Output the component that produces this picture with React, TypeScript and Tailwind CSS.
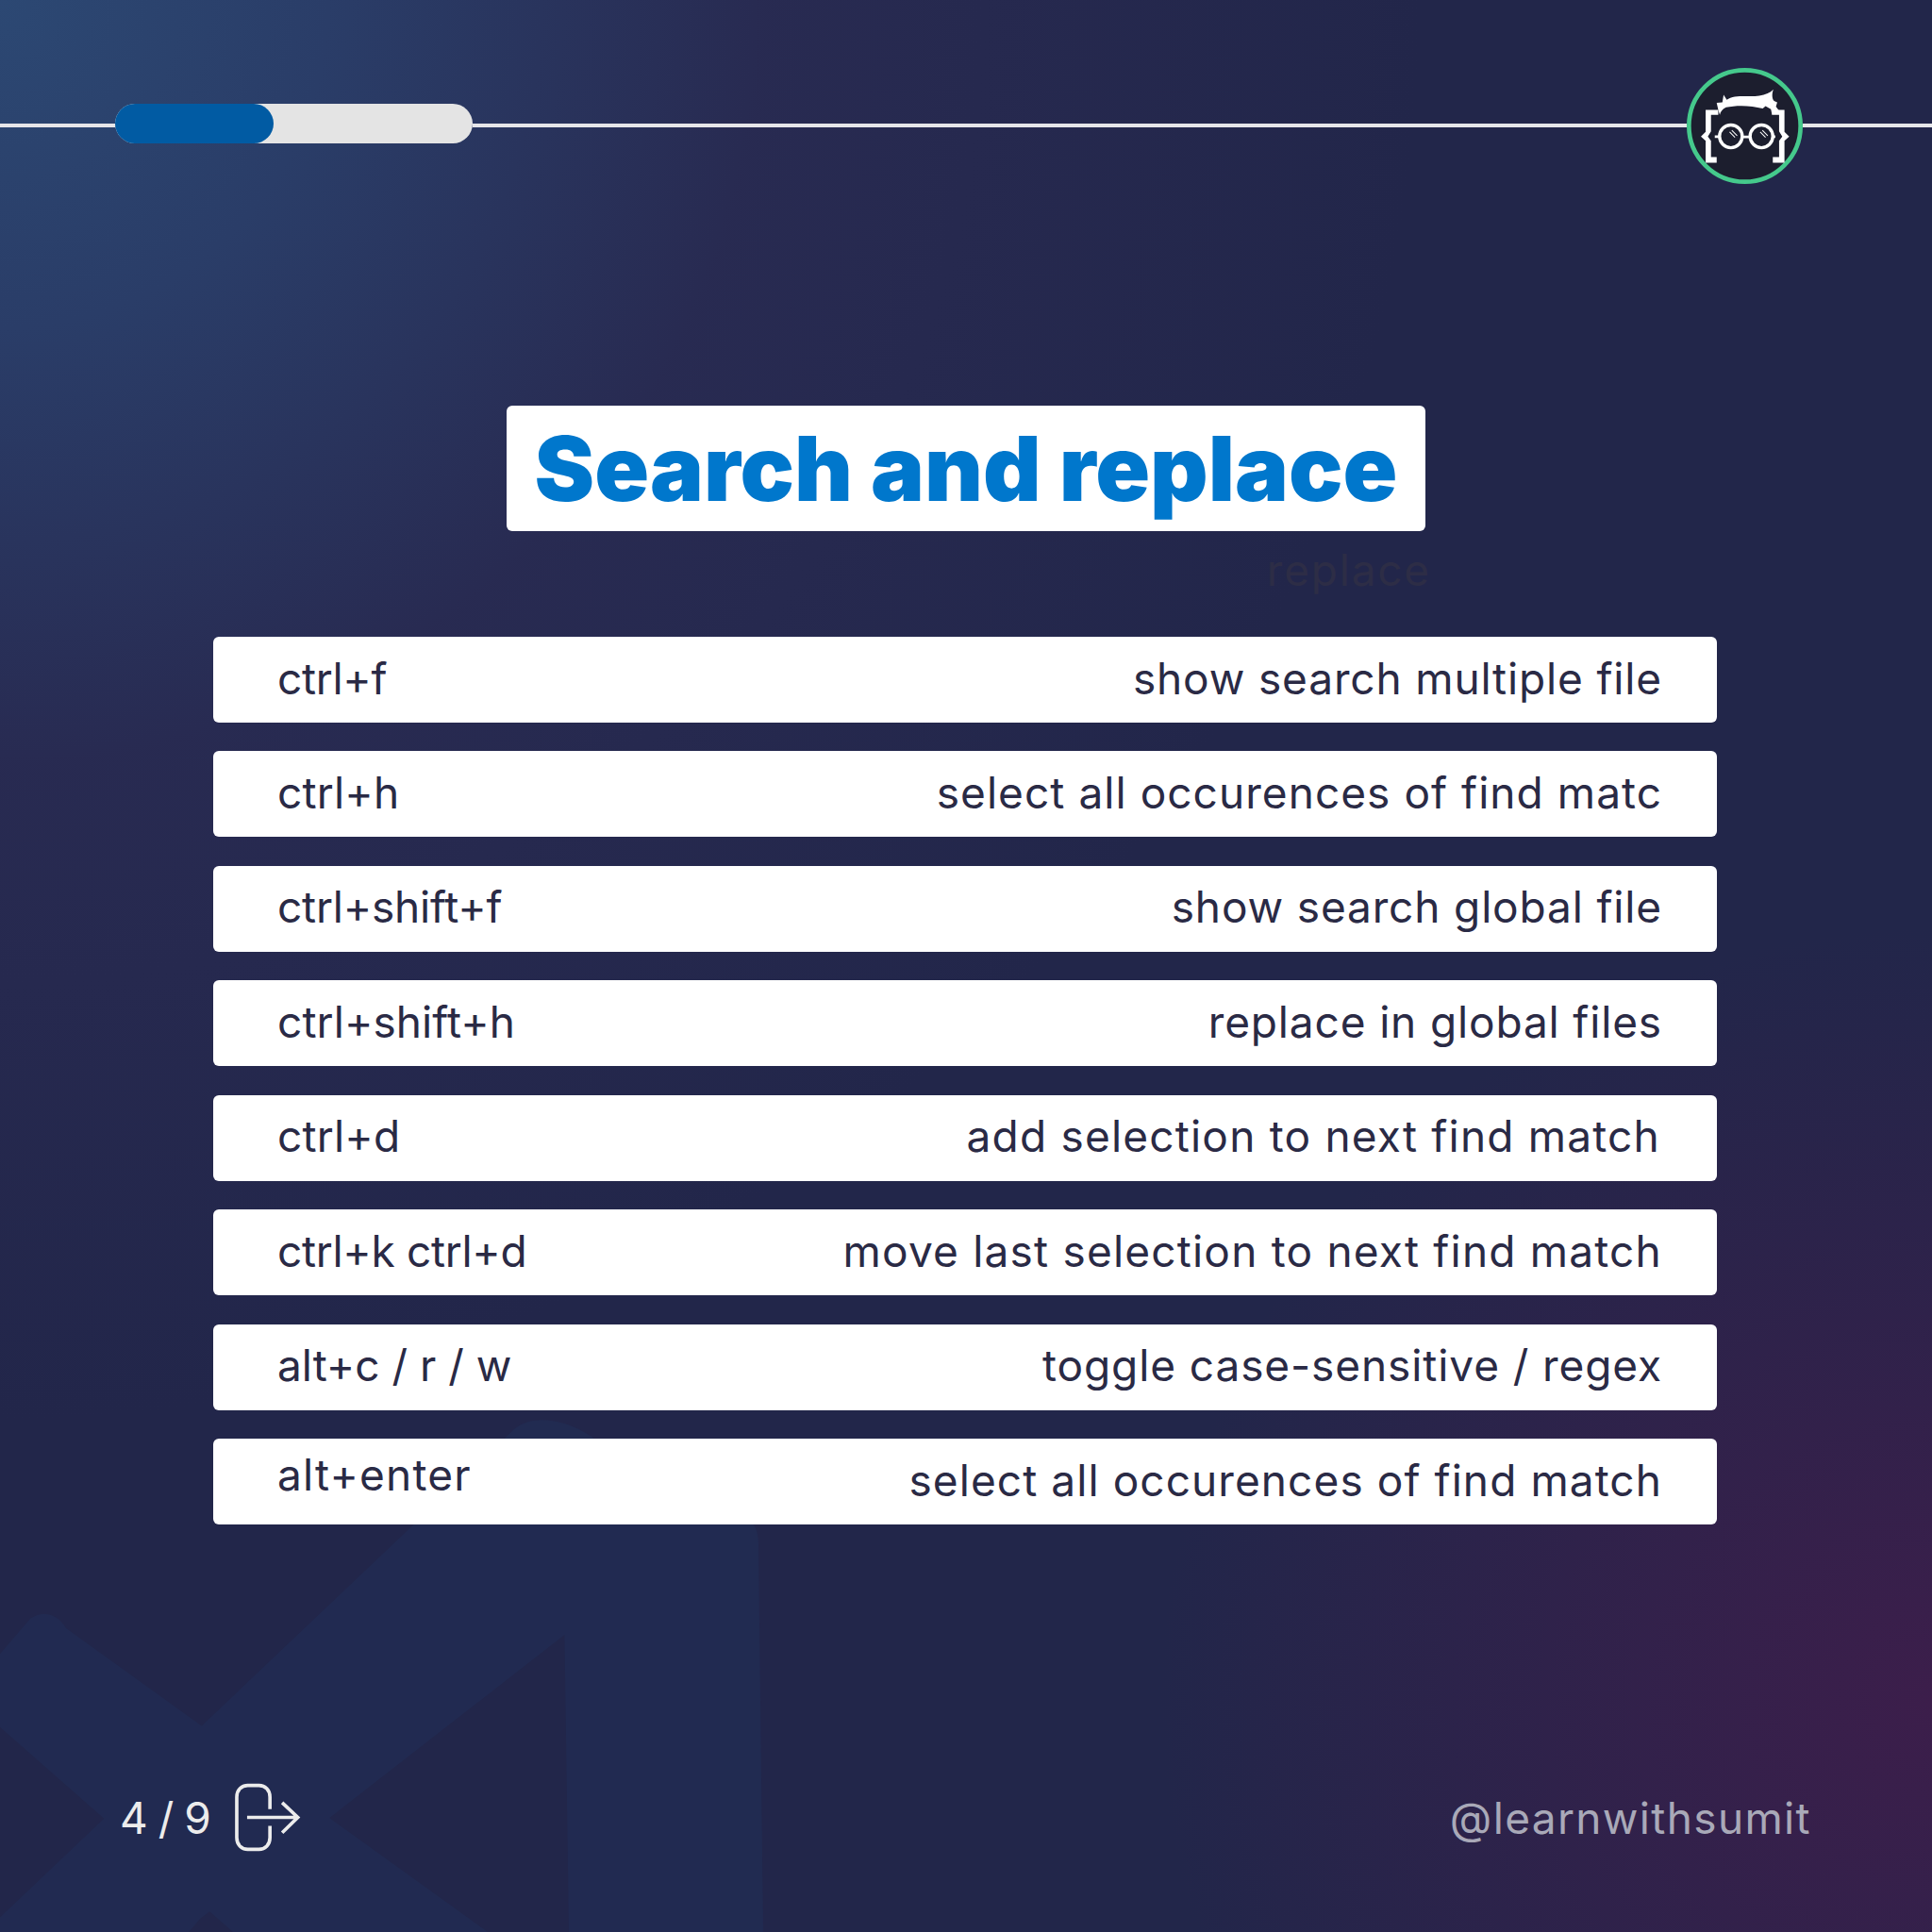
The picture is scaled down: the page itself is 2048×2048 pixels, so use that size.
const ROWS = [
  { keys: 'ctrl+f', keysClass: 'tracking-[-0.3px]', action: 'show search multiple file', actionClass: 'tracking-[0.85px]' },
  { keys: 'ctrl+h', keysClass: 'tracking-[0.2px]', action: 'select all occurences of find matc', actionClass: 'tracking-[1.05px]' },
  { keys: 'ctrl+shift+f', keysClass: 'tracking-[-0.2px]', action: 'show search global file', actionClass: 'tracking-[0.85px]' },
  { keys: 'ctrl+shift+h', keysClass: 'tracking-[0.1px]', action: 'replace in global files', actionClass: 'tracking-[0.85px]' },
  { keys: 'ctrl+d', keysClass: 'tracking-[0.2px]', action: 'add selection to next find match', actionClass: 'tracking-[1.2px] mr-[2px]' },
  { keys: 'ctrl+k ctrl+d', keysClass: 'tracking-[-0.3px]', action: 'move last selection to next find match', actionClass: 'tracking-[1.2px]' },
  { keys: 'alt+c / r / w', keysClass: '', action: 'toggle case-sensitive / regex', actionClass: 'tracking-[0.9px]' },
  { keys: 'alt+enter', keysClass: 'tracking-[1.2px] -mt-[11px]', action: 'select all occurences of find match', actionClass: 'tracking-[1.08px]' },
]

function Logo() {
  return (
    <svg viewBox="145 67 368 368" className="w-[123px] h-[123px] shrink-0">
      <circle cx="329" cy="251" r="177" fill="#1c1e2e" stroke="#45c98c" strokeWidth="14" />
      {/* hair */}
      <path
        fill="#fff"
        d="M240 178 L258 176 L262 152 L272 168 C295 150 345 160 375 155 C395 152 410 146 420 135 C414 150 416 165 422 172 L432 176 L428 190 L440 205 L415 212 L412 198 L395 188 L386 196 C350 185 300 185 270 192 C258 197 252 206 250 216 L245 200 Z"
      />
      {/* brackets */}
      <path
        fill="#fff"
        d="M205 200 H245 V216 H222 V268 L212 285 L222 298 V350 H240 V368 H205 V298 L190 285 L205 270 Z"
      />
      <path
        fill="#fff"
        d="M455 200 H415 V216 H438 V268 L448 285 L438 298 V350 H418 V368 H455 V298 L470 285 L455 270 Z"
      />
      {/* glasses */}
      <circle cx="285" cy="284" r="36" fill="#1c1e2e" stroke="#fff" strokeWidth="10" />
      <circle cx="382" cy="284" r="36" fill="#1c1e2e" stroke="#fff" strokeWidth="10" />
      <path stroke="#fff" strokeWidth="8" d="M320 286 H347 M234 285 H249 M418 285 H426" fill="none" />
      <path stroke="#fff" strokeWidth="3" d="M281 270 L298 287 M288 265 L305 282 M378 270 L395 287 M385 265 L402 282" fill="none" />
    </svg>
  )
}

function ExitIcon() {
  return (
    <svg viewBox="445 90 220 230" className="w-[73px] h-[77px] shrink-0" fill="none" stroke="#ececec" strokeWidth="11">
      <path d="M563 179 V140 C563 118 548 103 528 103 H492 C472 103 457 118 457 140 V270 C457 292 472 307 492 307 H528 C548 307 563 292 563 270 V232" />
      <path d="M490 205 H648 M602 158 L652 205 L602 254" />
    </svg>
  )
}

export default function App() {
  return (
    <div className="relative w-[2048px] h-[2048px] overflow-hidden flex flex-col font-['Inter',sans-serif] bg-[#22264a]">
      {/* background wash */}
      <div className="absolute inset-0 bg-[radial-gradient(circle_at_0%_0%,#2c4873_0%,#2a3d68_12%,rgba(42,44,84,0.75)_28%,rgba(34,38,74,0)_52%)]" />
      <div className="absolute inset-0 bg-[radial-gradient(circle_at_100%_88%,#3c1e4b_0%,rgba(60,30,75,0.5)_15%,rgba(34,38,74,0)_30%)]" />

      {/* faded logo shapes */}
      <svg viewBox="0 0 2048 2048" className="absolute inset-0 w-[2048px] h-[2048px]">
        <g fill="#1c4a80" opacity="0.13">
          <path d="M597 1630 C597 1612 612 1600 630 1600 H770 C790 1600 804 1615 804 1635 L809 2048 H603 Z" />
          <path d="M-10 2042 L545 1515 C565 1498 600 1505 626 1522 L746 1618 L212 2034 L190 2060 H-10 Z" />
          <path d="M-10 1765 L32 1716 C42 1708 60 1708 70 1726 L517 2048 H247 L-10 1822 Z" />
        </g>
      </svg>

      {/* top bar */}
      <div className="relative flex items-center pt-[72px]">
        <div className="w-[122px] h-[4px] -mt-[2px] bg-[#e6e6e9]" />
        <div className="w-[379px] h-[42px] rounded-full bg-[#e4e4e4] -mt-[6px]">
          <div className="w-[168px] h-[42px] rounded-full bg-[#015ba3]" />
        </div>
        <div className="flex-1 h-[4px] -mt-[2px] bg-[#e6e6e9]" />
        <Logo />
        <div className="w-[137px] h-[4px] -mt-[2px] bg-[#e6e6e9]" />
      </div>

      {/* title */}
      <div className="relative flex justify-center mt-[235px]">
        <h1 className="w-[974px] h-[133px] rounded-[6px] bg-white flex items-center justify-center text-[#0077cc] text-[95.5px] font-black leading-none">
          Search and replace
        </h1>
      </div>
      <div className="relative flex justify-end pr-[531px] h-[112px]">
        <span className="text-[46px] tracking-[1.8px] leading-[82px] text-[#2d2d46]">replace</span>
      </div>

      {/* shortcut list */}
      <div className="relative flex flex-col gap-[30.45px] ml-[226px] mr-[228px]">
        {ROWS.map((row) => (
          <div key={row.keys} className="h-[91px] rounded-[6px] bg-white flex items-center justify-between pl-[68px] pr-[58px] pb-[4px] text-[46px] text-[#2a2a45] leading-none">
            <span className={row.keysClass}>{row.keys}</span>
            <span className={row.actionClass}>{row.action}</span>
          </div>
        ))}
      </div>

      {/* footer */}
      <div className="relative mt-auto mb-[83px] flex items-center justify-between pl-[127px] pr-[128px] text-[46px] leading-none">
        <div className="flex items-center gap-[24px] text-[#ececec]">
          <span className="tracking-[-1px]">4 / 9</span>
          <ExitIcon />
        </div>
        <span className="text-[#a9a9b8] tracking-[1.35px]">@learnwithsumit</span>
      </div>
    </div>
  )
}
